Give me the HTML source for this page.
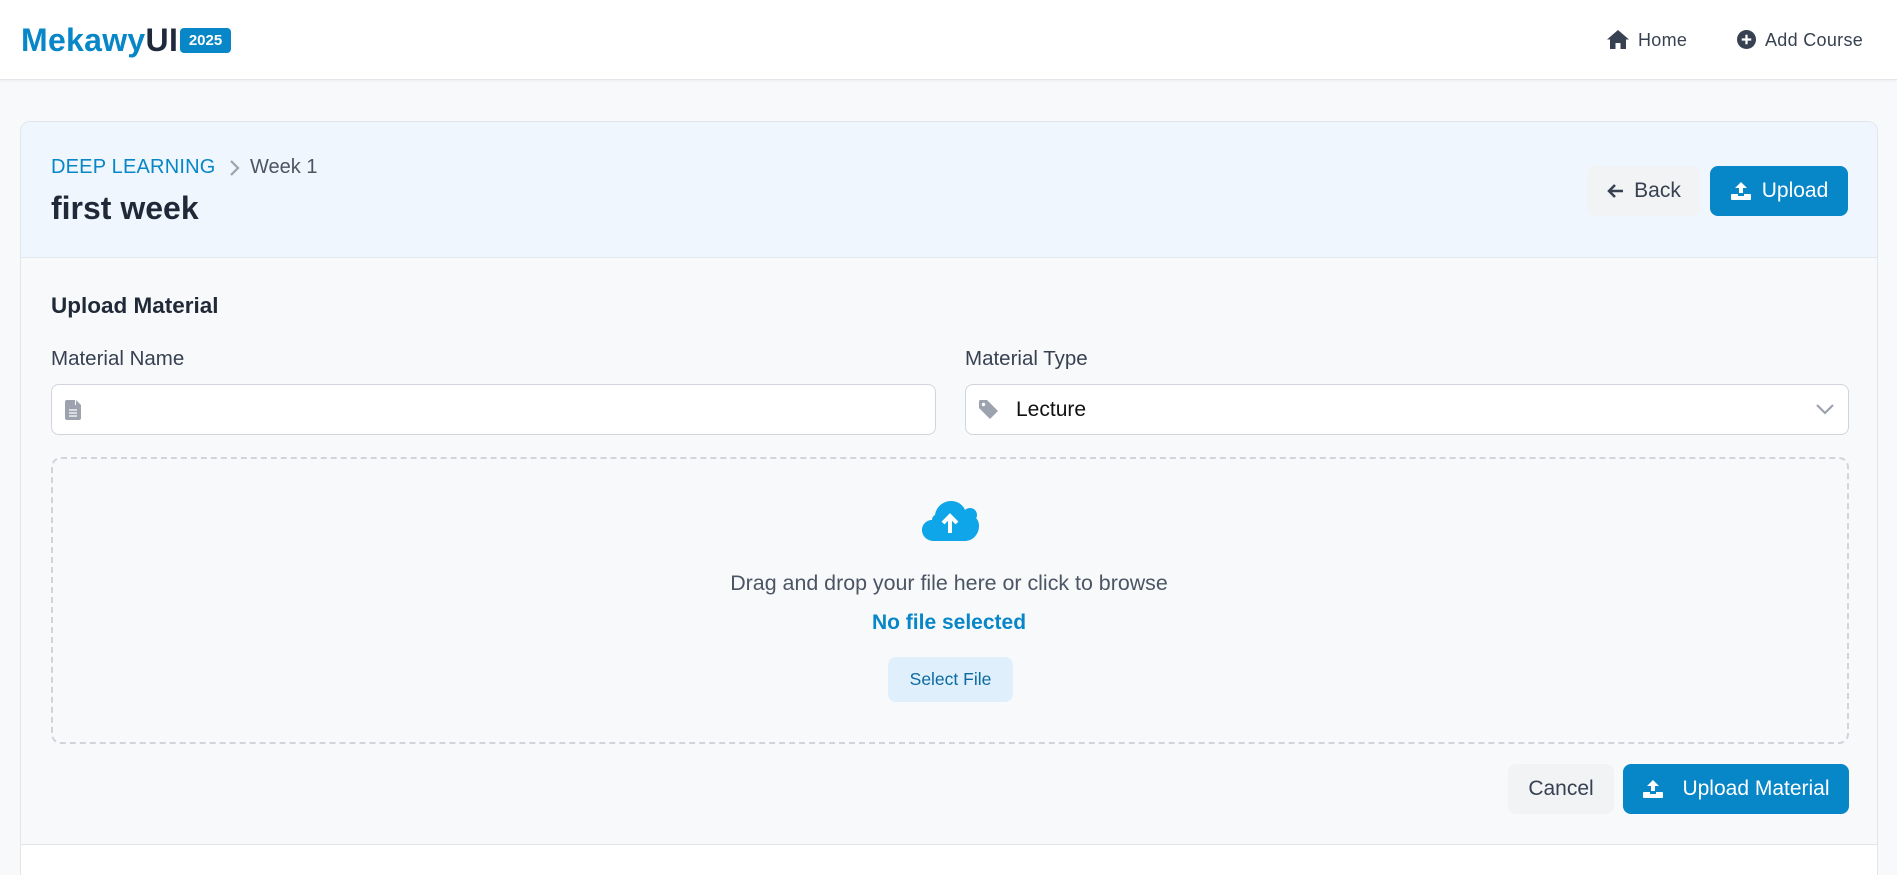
<!DOCTYPE html>
<html style="width:1897px;height:875px;overflow:hidden"><head><meta charset="utf-8"><style>
*{box-sizing:border-box;margin:0;padding:0}
body{width:1897px;height:875px;overflow:hidden;background:#f8f9fb;font-family:"Liberation Sans",sans-serif;color:#1f2937;position:relative}
.abs{position:absolute}
header{position:absolute;left:0;top:0;width:1897px;height:80px;background:#fff;border-bottom:1px solid #e2e5ea;box-shadow:0 1px 3px rgba(0,0,0,.05)}
.logo{left:21px;top:22px;font-size:32px;font-weight:bold;color:#0786c8;letter-spacing:0.3px}
.logo span{color:#1e293b}
.badge{left:180px;top:28px;width:51px;height:25px;background:#0786c8;color:#fff;border-radius:4px;font-size:15px;font-weight:bold;text-align:center;line-height:25px}
.nav{font-size:18px;color:#374151;top:30px;letter-spacing:0.3px}
.card{left:20px;top:121px;width:1858px;height:754px;background:#f8f9fb;border:1px solid #e2e5ea;border-bottom:none;border-radius:10px 10px 0 0;overflow:hidden}
.chead{left:0;top:0;width:100%;height:136px;background:#eff6fd;border-bottom:1px solid #e2e8f0}
.btn{border-radius:8px;font-size:21px;display:flex;align-items:center;justify-content:center;gap:10px}
.input{background:#fff;border:1px solid #d1d5db;border-radius:8px;height:51px}
</style></head><body>
<header>
<div class="abs logo">Mekawy<span>UI</span></div>
<div class="abs badge">2025</div>
<svg class="abs" style="left:1607px;top:30px" width="22" height="19" viewBox="0 0 22 19"><path d="M11 0L0 9.5h3V19h5.5v-6h5v6H19V9.5h3z" fill="#374151"/></svg>
<div class="abs nav" style="left:1638px">Home</div>
<svg class="abs" style="left:1737px;top:30px" width="19" height="19" viewBox="0 0 20 20"><circle cx="10" cy="10" r="10" fill="#374151"/><path d="M10 5v10M5 10h10" stroke="#fff" stroke-width="2.4"/></svg>
<div class="abs nav" style="left:1765px">Add Course</div>
</header>
<div class="abs card">
<div class="abs chead">
<div class="abs" style="left:30px;top:34px;font-size:20px;color:#0786c8;letter-spacing:0.2px">DEEP LEARNING</div>
<svg class="abs" style="left:207px;top:37px" width="12" height="18" viewBox="0 0 12 18"><path d="M3 2l7 7-7 7" stroke="#9ca3af" stroke-width="2.2" fill="none"/></svg>
<div class="abs" style="left:229px;top:34px;font-size:20px;color:#4b5563">Week 1</div>
<div class="abs" style="left:30px;top:68px;font-size:32px;font-weight:bold;color:#1f2937">first week</div>
<div class="abs btn" style="left:1566px;top:44px;width:113px;height:50px;background:#f1f3f5;color:#374151"><svg width="18" height="16" viewBox="0 0 18 16"><path d="M17 8H3M9 2L3 8l6 6" stroke="#374151" stroke-width="2.5" fill="none"/></svg>Back</div>
<div class="abs btn" style="left:1689px;top:44px;width:138px;height:50px;background:#0786c8;color:#fff"><svg width="22" height="20" viewBox="0 0 22 20"><path d="M11 1L5 7h4v7h4V7h4z" fill="#fff"/><rect x="1" y="13" width="20" height="6" rx="1" fill="#fff"/><rect x="8" y="12" width="6" height="3" fill="#0786c8"/></svg>Upload</div>
</div>
<div class="abs" style="left:30px;top:171px;font-size:22.5px;font-weight:bold;color:#1f2937">Upload Material</div>
<div class="abs" style="left:30px;top:225px;font-size:20.5px;color:#374151">Material Name</div>
<div class="abs" style="left:944px;top:225px;font-size:20.5px;color:#374151">Material Type</div>
<div class="abs input" style="left:30px;top:262px;width:885px"><svg class="abs" style="left:13px;top:15px" width="16" height="20" viewBox="0 0 16 20"><path d="M0 2a2 2 0 012-2h8v5h6v13a2 2 0 01-2 2H2a2 2 0 01-2-2z" fill="#9ca3af"/><path d="M11 0l5 5h-5z" fill="#9ca3af"/><path d="M4 10h8M4 13h8M4 16h8" stroke="#fff" stroke-width="1.3"/></svg></div>
<div class="abs input" style="left:944px;top:262px;width:884px"><svg class="abs" style="left:13px;top:15px" width="19" height="19" viewBox="0 0 19 19"><path d="M0 1.5A1.5 1.5 0 011.5 0H8l11 11-8 8L0 8z" fill="#9ca3af"/><circle cx="4.5" cy="4.5" r="1.7" fill="#fff"/></svg><div class="abs" style="left:50px;top:13px;font-size:21px;color:#111">Lecture</div><svg class="abs" style="left:849px;top:18px" width="20" height="12" viewBox="0 0 20 12"><path d="M2 2l8 8 8-8" stroke="#9ca3af" stroke-width="2.2" fill="none"/></svg></div>
<div class="abs" style="left:30px;top:335px;width:1798px;height:287px;border:2px dashed #d1d5db;border-radius:10px"></div>
<svg class="abs" style="left:900px;top:378px" width="58" height="42" viewBox="0 0 58 42"><path d="M13 41C6 41 1 36 1 30c0-6 5-10 10-10 0-2 1-4 3-5C15 7 22 1 30 1c7 0 12 4 14 9 1-1 3-2 5-2 4 0 7 3 7 7 0 1 0 2-1 3 2 2 3 5 3 8 0 8-6 15-14 15z" fill="#0ea5e9"/><path d="M29 33V17M22 23l7-7 7 7" stroke="#fff" stroke-width="4" fill="none"/></svg>
<div class="abs" style="left:0;width:1856px;text-align:center;top:449px;font-size:21.4px;color:#4b5563">Drag and drop your file here or click to browse</div>
<div class="abs" style="left:0;width:1856px;text-align:center;top:489px;font-size:21px;font-weight:bold;color:#0786c8">No file selected</div>
<div class="abs btn" style="left:867px;top:535px;width:125px;height:45px;background:#dff0fc;color:#0b6aa0;font-size:17.5px">Select File</div>
<div class="abs btn" style="left:1487px;top:642px;width:106px;height:50px;background:#f1f3f5;color:#374151">Cancel</div>
<div class="abs btn" style="left:1602px;top:642px;width:226px;height:50px;background:#0786c8;color:#fff;gap:18px"><svg width="22" height="20" viewBox="0 0 22 20"><path d="M11 1L5 7h4v7h4V7h4z" fill="#fff"/><rect x="1" y="13" width="20" height="6" rx="1" fill="#fff"/><rect x="8" y="12" width="6" height="3" fill="#0786c8"/></svg>Upload Material</div>
<div class="abs" style="left:0;top:722px;width:100%;height:40px;background:#fff;border-top:1px solid #e2e5ea"></div>
</div>
</body></html>
